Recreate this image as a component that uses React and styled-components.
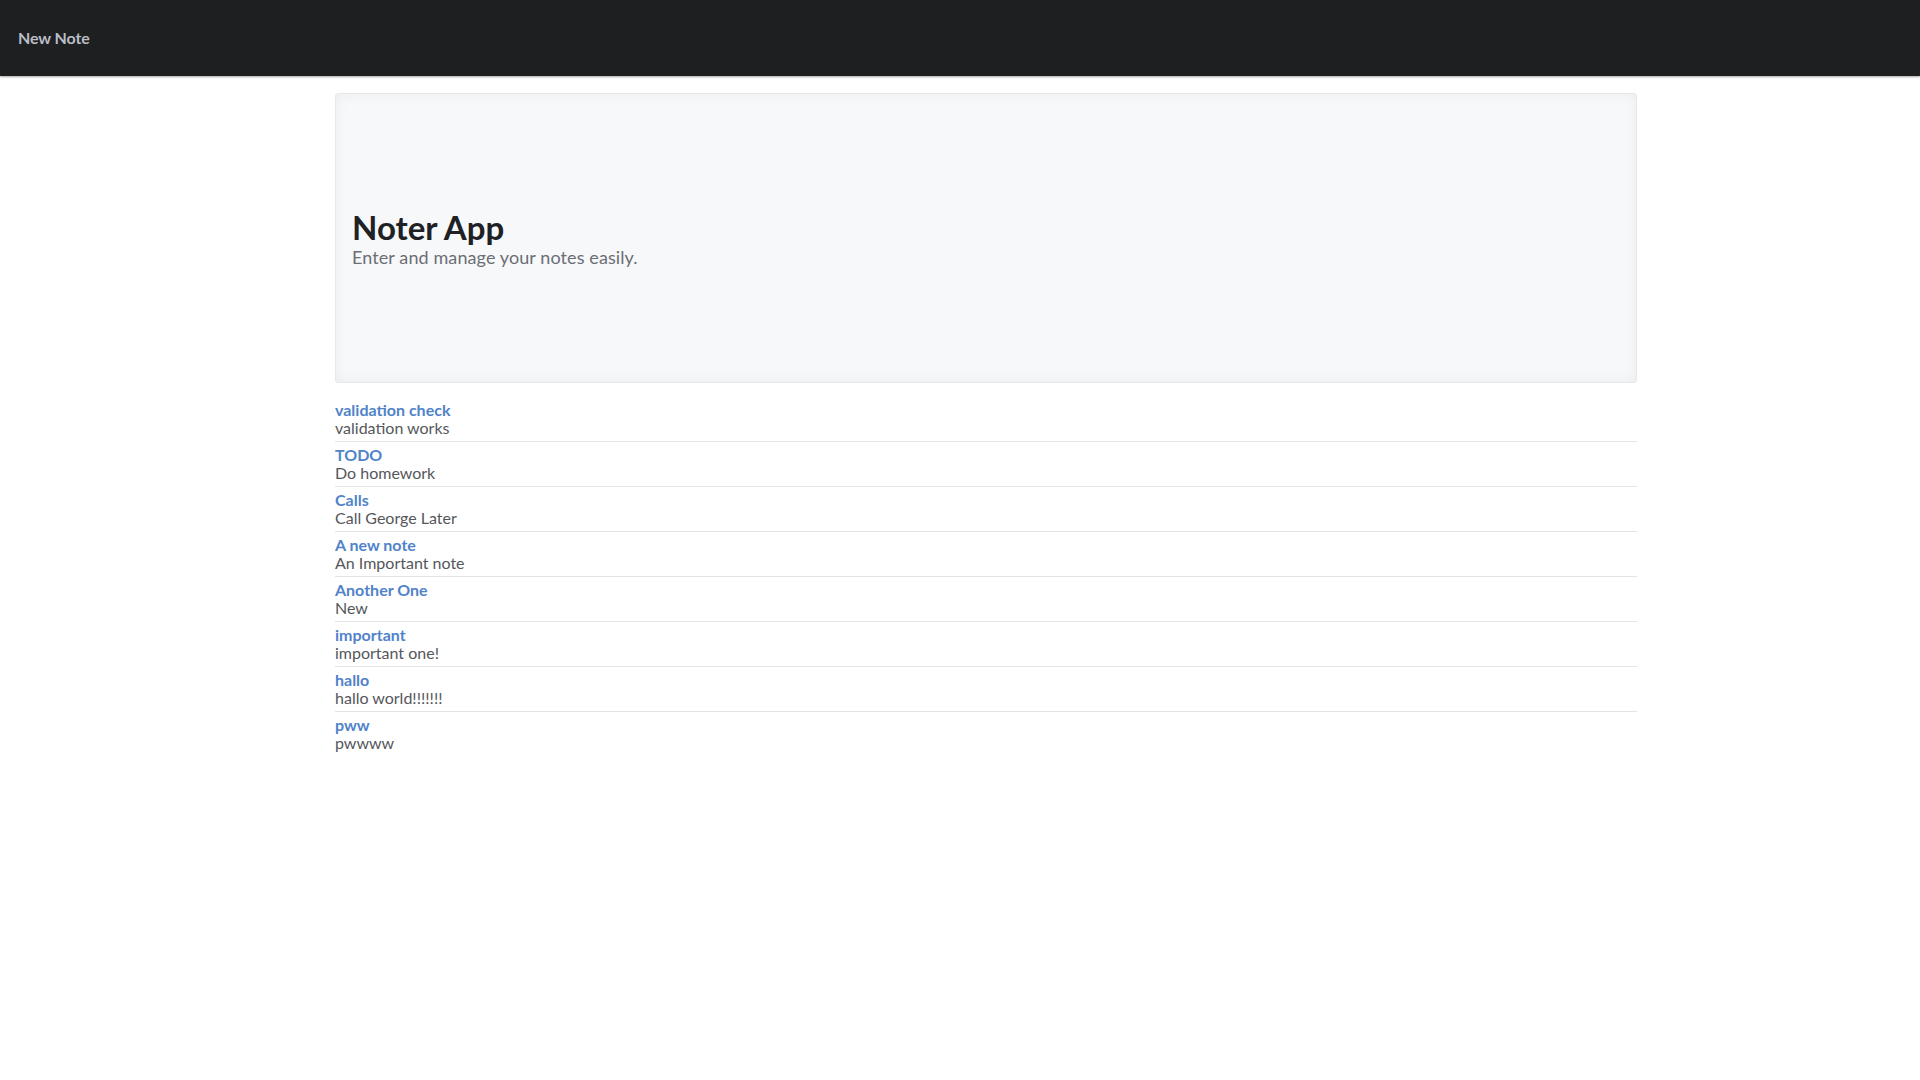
import styled, { createGlobalStyle } from "styled-components";

const GlobalStyle = createGlobalStyle`
  body {
    margin: 0;
    background: #ffffff;
    font-family: Lato, "Open Sans", "Liberation Sans", sans-serif;
  }
`;

const NavBar = styled.nav`
  height: 76px;
  background-color: #1e1f21;
  display: flex;
  align-items: center;
  padding: 0 18px 2px;
  box-sizing: border-box;
  box-shadow: 0 1px 2px rgba(0, 0, 0, 0.35);
`;

const Brand = styled.a`
  color: #b9bdc6;
  font-size: 16px;
  font-weight: 700;
  letter-spacing: -0.1px;
  text-decoration: none;
  cursor: pointer;
`;

const Container = styled.main`
  width: 1302px;
  margin: 17px 0 0 335px;
`;

const Jumbotron = styled.section`
  height: 290px;
  box-sizing: border-box;
  padding: 0 16px;
  display: flex;
  flex-direction: column;
  justify-content: center;
  background: #f7f8fa;
  border: 1px solid #e7e8ea;
  border-radius: 3px;
  box-shadow: inset 0 0 14px rgba(0, 0, 0, 0.05);
`;

const Title = styled.h1`
  margin: 0;
  font-size: 33px;
  font-weight: 700;
  line-height: 38px;
  color: #202124;
`;

const Lead = styled.p`
  margin: 0;
  font-size: 18px;
  line-height: 22px;
  letter-spacing: 0.1px;
  color: #6b6e74;
`;

const NoteList = styled.ul`
  list-style: none;
  margin: 14px 0 0;
  padding: 0;
`;

const NoteItem = styled.li`
  padding: 4px 0;
  border-bottom: 1px solid #e4e4e4;

  &:last-child {
    border-bottom: none;
  }
`;

const NoteTitle = styled.a`
  display: block;
  font-size: 16px;
  font-weight: 700;
  line-height: 18px;
  color: #5083c9;
  text-decoration: none;
  cursor: pointer;
`;

const NoteBody = styled.div`
  font-size: 16px;
  line-height: 18px;
  color: #55575b;
`;

const notes = [
  { title: "validation check", body: "validation works" },
  { title: "TODO", body: "Do homework" },
  { title: "Calls", body: "Call George Later" },
  { title: "A new note", body: "An Important note" },
  { title: "Another One", body: "New" },
  { title: "important", body: "important one!" },
  { title: "hallo", body: "hallo world!!!!!!!" },
  { title: "pww", body: "pwwww" },
];

export default function App() {
  return (
    <>
      <GlobalStyle />
      <NavBar>
        <Brand>New Note</Brand>
      </NavBar>
      <Container>
        <Jumbotron>
          <Title>Noter App</Title>
          <Lead>Enter and manage your notes easily.</Lead>
        </Jumbotron>
        <NoteList>
          {notes.map((note, i) => (
            <NoteItem key={i}>
              <NoteTitle>{note.title}</NoteTitle>
              <NoteBody>{note.body}</NoteBody>
            </NoteItem>
          ))}
        </NoteList>
      </Container>
    </>
  );
}
